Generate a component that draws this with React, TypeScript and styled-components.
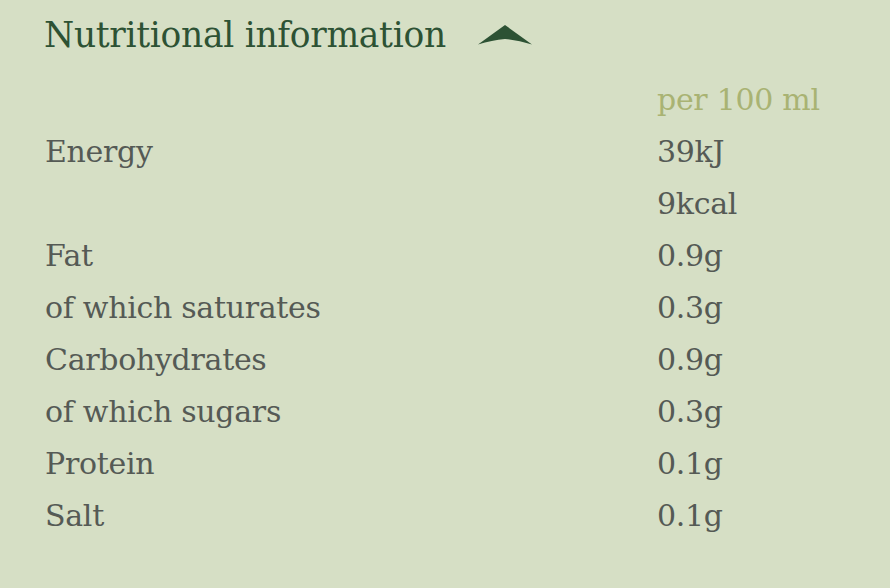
import React from "react";
import styled, { createGlobalStyle } from "styled-components";

const Global = createGlobalStyle`
  html, body { margin: 0; padding: 0; background: #d6dfc5; }
  body { font-family: "DejaVu Serif", "Liberation Serif", serif; }
`;

const Page = styled.div`
  width: 890px;
  height: 588px;
  background: #d6dfc5;
  padding: 13px 0 0 44px;
  box-sizing: border-box;
  overflow: hidden;
`;

const Header = styled.div`
  display: flex;
  align-items: center;
  gap: 32px;
  height: 44px;
`;

const Title = styled.h2`
  margin: 0;
  font-family: "DejaVu Serif", serif;
  font-weight: 400;
  font-size: 34.5px;
  line-height: 44px;
  color: #2d5234;
  letter-spacing: -0.3px;
`;

const Chevron = styled.svg`
  width: 54px;
  height: 20px;
  margin-top: -1px;
  display: block;
`;

const Table = styled.div`
  display: grid;
  grid-template-columns: 612px auto;
  margin-top: 17px;
  padding-left: 1px;
`;

const Cell = styled.div<{ $tone?: "head" | "body" }>`
  font-family: "DejaVu Serif", serif;
  font-size: 30px;
  line-height: 52px;
  height: 52px;
  letter-spacing: -0.3px;
  color: ${(p) => (p.$tone === "head" ? "#a9b373" : "#555a55")};
  white-space: nowrap;
`;

const rows: [string, string][] = [
  ["Energy", "39kJ"],
  ["", "9kcal"],
  ["Fat", "0.9g"],
  ["of which saturates", "0.3g"],
  ["Carbohydrates", "0.9g"],
  ["of which sugars", "0.3g"],
  ["Protein", "0.1g"],
  ["Salt", "0.1g"],
];

export default function App() {
  return (
    <Page>
      <Global />
      <Header>
        <Title>Nutritional information</Title>
        <Chevron viewBox="0 0 54 20">
          <path d="M27 0 L54 19.5 Q40 15 27 14 Q14 15 0 19.5 Z" fill="#2d5234" />
        </Chevron>
      </Header>
      <Table>
        <Cell />
        <Cell $tone="head">per 100 ml</Cell>
        {rows.map(([label, value], i) => (
          <React.Fragment key={i}>
            <Cell>{label}</Cell>
            <Cell>{value}</Cell>
          </React.Fragment>
        ))}
      </Table>
    </Page>
  );
}
